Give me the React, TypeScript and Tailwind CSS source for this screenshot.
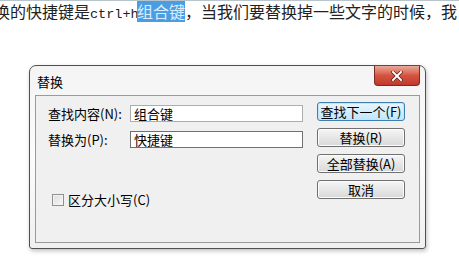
import React from "react";

const cjk = { fontFamily: '"Noto Sans CJK SC", "Liberation Sans", sans-serif' };

function Btn({ label, primary = false }: { label: string; primary?: boolean }) {
    return (
        <button
            className={
                primary
                    ? "w-[88px] h-[19px] rounded-[3px] border border-[#3c7fb1] bg-gradient-to-b from-[#eaf6fd] to-[#bee6fd] text-[13px] leading-none text-black flex items-center justify-center shadow-[inset_0_0_0_1px_#c4e5f6]"
                    : "w-[88px] h-[19px] rounded-[3px] border border-[#707070] bg-gradient-to-b from-[#f6f6f6] to-[#d8d8d8] text-[13px] leading-none text-black flex items-center justify-center shadow-[inset_0_0_0_1px_#fcfcfc]"
            }
            style={cjk}
        >
            {label}
        </button>
    );
}

export default function App() {
    return (
        <div className="w-[459px] h-[269px] bg-white overflow-hidden relative" style={cjk}>
            {/* document text behind the dialog */}
            <div className="h-[22px] flex items-baseline whitespace-nowrap text-[16px] leading-[21px] text-[#222] ml-[-6px] border-t border-[#b8c4cc]">
                <span>换的快捷键是</span>
                <span className="text-[13.5px] w-[47px]" style={{ fontFamily: '"Liberation Mono", monospace' }}>
                    ctrl+h
                </span>
                <span className="bg-[#4a9de3] text-[#dbeeff]">组合键</span>
                <span>，当我们要替换掉一些文字的时候，我</span>
            </div>

            {/* dialog window */}
            <div className="ml-[29px] mt-[43px] w-[397px] h-[184px] rounded-t-[7px] rounded-b-[3px] border border-[#505050] bg-gradient-to-b from-[#f4f4f4] via-[#fcfcfc] to-[#f0f0f0] flex flex-col shadow-[1px_2px_4px_rgba(0,0,0,0.25)]">
                <div className="h-[29px] flex items-start justify-between">
                    <span className="pl-[7px] pt-[6px] text-[13px] text-black">替换</span>
                    <div className="mr-[5px] w-[46px] h-[20px] rounded-b-[4px] border border-t-0 border-[#7a2a22] bg-gradient-to-b from-[#e9a99b] via-[#d4543f] to-[#c0392b] flex items-center justify-center">
                        <svg width="12" height="10" viewBox="0 0 12 10">
                            <path d="M2 1 L10 9 M10 1 L2 9" stroke="#5a1a12" strokeWidth="3.4" strokeLinecap="square" />
                            <path d="M2 1 L10 9 M10 1 L2 9" stroke="#ffffff" strokeWidth="2" strokeLinecap="square" />
                        </svg>
                    </div>
                </div>

                <div className="mx-[5px] mb-[5px] flex-1 border border-[#9a9a9a] bg-[#f0f0f0] flex pt-[6px] pl-[12px] pr-[13px] gap-[14px]">
                    <div className="flex flex-col w-[255px] pt-[3px]">
                        <div className="flex items-center h-[17px] text-[13px] text-black">
                            <span className="w-[82px]">查找内容(N):</span>
                            <div className="flex-1 h-[17px] border border-[#abadb3] bg-white px-[3px] flex items-center leading-none">组合键</div>
                        </div>
                        <div className="flex items-center h-[17px] mt-[9px] text-[13px] text-black">
                            <span className="w-[82px]">替换为(P):</span>
                            <div className="flex-1 h-[17px] border border-[#707070] bg-white px-[3px] flex items-center leading-none">快捷键</div>
                        </div>
                        <div className="flex items-center mt-[42px] ml-[4px] gap-[4px] text-[13px] text-black">
                            <div className="w-[12px] h-[12px] border border-[#8f8f8f] bg-gradient-to-br from-[#dcdcdc] to-[#f8f8f8] shadow-[inset_0_0_0_1px_#f4f4f4]" />
                            <span>区分大小写(C)</span>
                        </div>
                    </div>
                    <div className="flex flex-col gap-[7px]">
                        <Btn label="查找下一个(F)" primary />
                        <Btn label="替换(R)" />
                        <Btn label="全部替换(A)" />
                        <Btn label="取消" />
                    </div>
                </div>
            </div>
        </div>
    );
}
